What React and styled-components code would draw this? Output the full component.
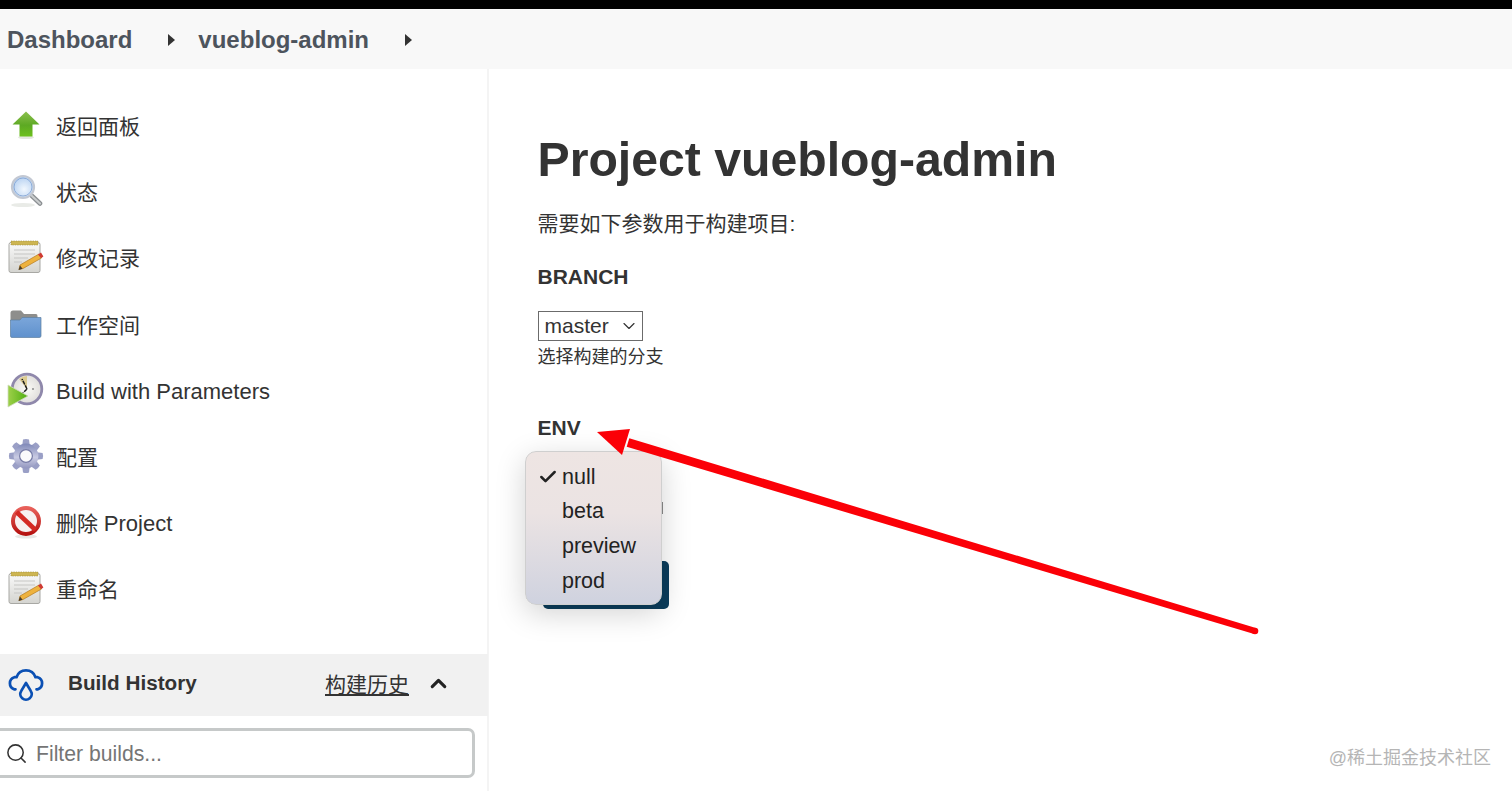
import React from 'react';
import styled, { createGlobalStyle } from 'styled-components';
import { Check, ChevronDown, ChevronUp, Search } from 'lucide-react';

const GlobalStyle = createGlobalStyle`
    html, body {
        margin: 0;
        padding: 0;
        height: 100%;
        overflow: hidden;
        background: #fff;
    }
    body {
        font-family: "Liberation Sans", "Noto Sans CJK SC", Arial, sans-serif;
        color: #333;
    }
`

const Latin = styled.span`
    font-size: 22px;
`
const LatinLabel = styled(Latin)`
    display: block;
    padding-top: 4px;
`

function BackIcon() {
    return (
        <svg width="30" height="30" viewBox="0 0 30 30">
            <defs>
                <linearGradient id="backFill" x1="0" y1="0" x2="0" y2="1">
                    <stop offset="0" stopColor="#8cc04f" />
                    <stop offset="0.55" stopColor="#5da923" />
                    <stop offset="1" stopColor="#6cc01c" />
                </linearGradient>
            </defs>
            <ellipse cx="15" cy="27.5" rx="8" ry="1.6" fill="#e4e7df" />
            <path d="M15 1.5 L28.5 14.5 H21.5 V26.5 H8.5 V14.5 H1.5 Z" fill="url(#backFill)" />
        </svg>
    )
}

function StatusIcon() {
    return (
        <svg width="34" height="34" viewBox="0 0 34 34">
            <defs>
                <radialGradient id="lensFill" cx="0.55" cy="0.6" r="0.7">
                    <stop offset="0" stopColor="#f2f8fe" />
                    <stop offset="1" stopColor="#a9c8ee" />
                </radialGradient>
            </defs>
            <ellipse cx="14" cy="31" rx="12" ry="2" fill="#e9ebe7" />
            <path d="M22 21 L31 29.5" stroke="#8b8f92" strokeWidth="4.6" strokeLinecap="round" />
            <path d="M22 21 L31 29.5" stroke="#c9cccd" strokeWidth="2.2" strokeLinecap="round" />
            <circle cx="14" cy="13" r="11" fill="url(#lensFill)" stroke="#c3c8d2" strokeWidth="2.2" />
            <circle cx="14" cy="13" r="9" fill="none" stroke="#7d9fd0" strokeWidth="0.8" />
        </svg>
    )
}

function NotepadIcon() {
    return (
        <svg width="36" height="34" viewBox="0 0 36 34">
            <defs>
                <linearGradient id="padFill" x1="0" y1="0" x2="0" y2="1">
                    <stop offset="0" stopColor="#fafafa" />
                    <stop offset="1" stopColor="#d4d4d0" />
                </linearGradient>
            </defs>
            <rect x="1" y="2.5" width="31" height="30" rx="2" fill="url(#padFill)" stroke="#a8a8a4" />
            <rect x="3" y="1" width="27" height="4" fill="#cdb552" stroke="#9b8a3a" strokeWidth="0.6" strokeDasharray="1.4 1" />
            <path d="M6 10H27M6 14H27M6 18H20M6 22H14" stroke="#c6c6c4" strokeWidth="1.2" />
            <path d="M12 25 L31 14 L33.5 18 L15 28.5 L11 29.5 Z" fill="#eeb23e" stroke="#b57a1e" strokeWidth="0.7" />
            <path d="M30 14.4 L33 12.6 L35.4 16.5 L33 18.2 Z" fill="#cf3a33" />
            <path d="M10.5 30 L12 25.5 L14.6 28.8 Z" fill="#4d3f2b" />
        </svg>
    )
}

function FolderIcon() {
    return (
        <svg width="34" height="30" viewBox="0 0 34 30">
            <defs>
                <linearGradient id="folderFill" x1="0" y1="0" x2="0" y2="1">
                    <stop offset="0" stopColor="#7ba6da" />
                    <stop offset="1" stopColor="#5f91cd" />
                </linearGradient>
            </defs>
            <path d="M1.5 4 Q1.5 1.5 4 1.5 H12 L15 5 H27 Q28.5 5 28.5 7 V12 H1.5 Z" fill="#8e8e8c" />
            <path d="M1.5 11 L11 11 L13 8.5 H32 V27 Q32 28.5 30 28.5 H3 Q1.5 28.5 1.5 27 Z" fill="url(#folderFill)" stroke="#5d7f9f" strokeWidth="0.7" />
        </svg>
    )
}

function BuildIcon() {
    return (
        <svg width="38" height="38" viewBox="0 0 38 38">
            <defs>
                <linearGradient id="playFill" x1="0" y1="0" x2="1" y2="0">
                    <stop offset="0" stopColor="#9ed04a" />
                    <stop offset="1" stopColor="#4fae10" />
                </linearGradient>
                <radialGradient id="clockFace" cx="0.5" cy="0.5" r="0.55">
                    <stop offset="0" stopColor="#fbfbf6" />
                    <stop offset="1" stopColor="#dcdad8" />
                </radialGradient>
            </defs>
            <circle cx="20" cy="18" r="14.8" fill="url(#clockFace)" stroke="#8f88ab" strokeWidth="2.8" />
            <path d="M20 18 L12 8 A13 13 0 0 1 20 5 Z" fill="#dccb90" />
            <path d="M20 18 L15 8 M20 18 L14 24" stroke="#1c1c1c" strokeWidth="1.5" strokeDasharray="4 1" />
            <circle cx="26" cy="18" r="1" fill="#8c8c8c" />
            <path d="M1 14 L21 25 L1 36 Z" fill="url(#playFill)" stroke="#cfdcbc" strokeWidth="0.8" />
        </svg>
    )
}

function GearIcon() {
    const teeth = [0, 45, 90, 135, 180, 225, 270, 315]
    return (
        <svg width="36" height="36" viewBox="0 0 36 36">
            <defs>
                <linearGradient id="gearFill" x1="0" y1="0" x2="0" y2="1">
                    <stop offset="0" stopColor="#7f88b8" />
                    <stop offset="0.55" stopColor="#c9cbe3" />
                    <stop offset="1" stopColor="#9296bf" />
                </linearGradient>
            </defs>
            {teeth.map(deg => (
                <path key={deg} d="M14 9 L15 1.4 Q18 0.4 21 1.4 L22 9 Z" fill="#9a9fc6" transform={`rotate(${deg} 18 18)`} />
            ))}
            <circle cx="18" cy="18" r="12.4" fill="url(#gearFill)" />
            <circle cx="18" cy="18" r="6.4" fill="#fafafc" stroke="#767ba6" strokeWidth="1.2" />
        </svg>
    )
}

function DeleteIcon() {
    return (
        <svg width="34" height="34" viewBox="0 0 34 34">
            <defs>
                <linearGradient id="ringFill" x1="0" y1="0" x2="0" y2="1">
                    <stop offset="0" stopColor="#e8605a" />
                    <stop offset="1" stopColor="#b51210" />
                </linearGradient>
            </defs>
            <ellipse cx="17" cy="31.5" rx="11" ry="2" fill="#e8e8e6" />
            <circle cx="17" cy="16" r="13" fill="#f7f0f0" stroke="url(#ringFill)" strokeWidth="4" />
            <path d="M7.5 7 L26.5 25" stroke="#d42a24" strokeWidth="4.6" />
        </svg>
    )
}

function CloudIcon() {
    return (
        <svg width="40" height="38" viewBox="0 0 38 36" fill="none" stroke="#0b50b4" strokeWidth="2.6" strokeLinecap="round" strokeLinejoin="round">
            <path d="M9 24 H8 A6 6 0 0 1 8 12.5 H10 A9.5 9.5 0 0 1 28 12.5 H30 A6 6 0 0 1 30 24 H29" />
            <path d="M19 18 L23.5 25.5 A5.4 5.4 0 1 1 14.5 25.5 Z" />
        </svg>
    )
}

const navItems = [
    { id: 'back', label: '返回面板', icon: <BackIcon /> },
    { id: 'status', label: '状态', icon: <StatusIcon /> },
    { id: 'changes', label: '修改记录', icon: <NotepadIcon /> },
    { id: 'workspace', label: '工作空间', icon: <FolderIcon /> },
    { id: 'build', label: <LatinLabel>Build with Parameters</LatinLabel>, icon: <BuildIcon /> },
    { id: 'config', label: '配置', icon: <GearIcon /> },
    { id: 'delete', label: <>删除 <Latin>Project</Latin></>, icon: <DeleteIcon /> },
    { id: 'rename', label: '重命名', icon: <NotepadIcon /> },
]

function App() {
    return (
        <Page>
            <GlobalStyle />
            <TopEdge />
            <Breadcrumb>
                <Crumb>Dashboard</Crumb>
                <Caret />
                <Crumb>vueblog-admin</Crumb>
                <Caret />
            </Breadcrumb>
            <Body>
                <Sidebar>
                    <NavList>
                        {navItems.map(item => (
                            <NavItem key={item.id}>
                                <NavIcon>{item.icon}</NavIcon>
                                <span>{item.label}</span>
                            </NavItem>
                        ))}
                    </NavList>
                    <HistoryHeader>
                        <CloudIcon />
                        <HistoryTitle>Build History</HistoryTitle>
                        <HistoryLink>构建历史</HistoryLink>
                        <ChevronUp size={25} strokeWidth={3} color="#222" />
                    </HistoryHeader>
                    <FilterBox>
                        <Search size={23} strokeWidth={1.6} color="#333" />
                        <span>Filter builds...</span>
                    </FilterBox>
                </Sidebar>
                <Main>
                    <Title>Project vueblog-admin</Title>
                    <Intro>需要如下参数用于构建项目:</Intro>
                    <ParamName>BRANCH</ParamName>
                    <SelectBox>
                        master
                        <ChevronDown size={20} strokeWidth={1.4} color="#333" />
                    </SelectBox>
                    <Help>选择构建的分支</Help>
                    <EnvName>ENV</EnvName>
                    <EnvSelect />
                    <BuildButton />
                    <Menu>
                        <MenuItem $checked>
                            <Check size={20} strokeWidth={3} color="#222" />
                            null
                        </MenuItem>
                        <MenuItem>beta</MenuItem>
                        <MenuItem>preview</MenuItem>
                        <MenuItem>prod</MenuItem>
                    </Menu>
                </Main>
            </Body>
            <Arrow viewBox="0 0 1512 791" width="1512" height="791">
                <path d="M629.3 438.2 L1255.9 627.9 L1254.1 634.1 L626.7 446.8 Z" fill="#fb0007" />
                <circle cx="1255" cy="631" r="3.3" fill="#fb0007" />
                <path d="M597 432 L630 429 L622 455 Z" fill="#fb0007" />
            </Arrow>
            <Watermark>@稀土掘金技术社区</Watermark>
        </Page>
    )
}

export default App

const Page = styled.div`
    width: 1512px;
    height: 791px;
    overflow: hidden;
    position: relative;
    background: #fff;
`
const TopEdge = styled.div`
    height: 9px;
    background: #000;
`
const Breadcrumb = styled.nav`
    height: 60px;
    box-sizing: border-box;
    padding: 1px 0 0 7px;
    background: #f8f8f8;
    display: flex;
    align-items: center;
`
const Crumb = styled.span`
    font-size: 24px;
    font-weight: 700;
    color: #4d545d;
`
const Caret = styled.i`
    width: 0;
    height: 0;
    margin: 0 23px 0 36px;
    border-left: 7px solid #333;
    border-top: 6px solid transparent;
    border-bottom: 6px solid transparent;
`
const Body = styled.div`
    display: flex;
    height: 722px;
`
const Sidebar = styled.aside`
    width: 487px;
    flex: none;
    border-right: 2px solid #f4f4f4;
    display: flex;
    flex-direction: column;
`
const NavList = styled.ul`
    list-style: none;
    margin: 0;
    padding: 23px 0 0;
    height: 585px;
    box-sizing: border-box;
`
const NavItem = styled.li`
    height: 66.2px;
    display: flex;
    align-items: center;
    font-size: 21px;
    color: #333;
`
const NavIcon = styled.span`
    width: 51px;
    margin-right: 5px;
    flex: none;
    display: flex;
    align-items: center;
    justify-content: center;
`
const HistoryHeader = styled.div`
    height: 62px;
    box-sizing: border-box;
    background: #f1f1f1;
    display: flex;
    align-items: center;
    padding: 0 37px 4px 6px;
    margin-right: -1px;
`
const HistoryTitle = styled.b`
    margin-left: 22px;
    font-size: 20.7px;
    color: #333;
    flex: 1;
`
const HistoryLink = styled.span`
    font-size: 21px;
    color: #333;
    text-decoration: underline;
    margin-right: 17px;
`
const FilterBox = styled.div`
    margin: 12px 12px 0 -6px;
    height: 50px;
    box-sizing: border-box;
    border: 3px solid #c6c9c9;
    border-radius: 7px;
    display: flex;
    align-items: center;
    gap: 8px;
    padding: 1px 0 0 8px;
    font-size: 21.2px;
    color: #757575;
`
const Main = styled.main`
    flex: 1;
    padding: 58px 0 0 48.5px;
    position: relative;
`
const Title = styled.h1`
    margin: 0;
    font-size: 48.2px;
    line-height: 64px;
    font-weight: 700;
    color: #333;
`
const Intro = styled.p`
    margin: 18px 0 0;
    font-size: 21px;
    line-height: 30px;
`
const ParamName = styled.h3`
    margin: 23px 0 0;
    font-size: 21px;
    line-height: 30px;
    font-weight: 700;
`
const SelectBox = styled.div`
    margin-top: 19px;
    width: 105.5px;
    height: 30px;
    box-sizing: border-box;
    border: 1px solid #6b6b6b;
    display: flex;
    align-items: center;
    justify-content: space-between;
    padding: 0 3px 0 6px;
    font-size: 21px;
`
const Help = styled.div`
    margin-top: 4px;
    font-size: 18px;
    line-height: 24px;
`
const EnvName = styled(ParamName)`
    margin-top: 44px;
`
const EnvSelect = styled.div`
    margin-top: 59px;
    width: 125.5px;
    height: 12px;
    box-sizing: border-box;
    border-right: 1px solid #8a8a8a;
`
const BuildButton = styled.div`
    margin: 47px 0 0 5px;
    width: 126px;
    height: 48px;
    background: #0b3d5c;
    border-radius: 5px;
`
const Menu = styled.ul`
    position: absolute;
    left: 36px;
    top: 382px;
    width: 137px;
    height: 154px;
    margin: 0;
    padding: 8px 0 0;
    box-sizing: border-box;
    list-style: none;
    border: 1px solid #cfcfcf;
    border-radius: 11px;
    background: linear-gradient(180deg, #eee5e3 0%, #ebe3e3 40%, #cfd2df 100%);
    box-shadow: 0 8px 30px rgba(0, 0, 0, 0.18);
`
const MenuItem = styled.li`
    height: 34.6px;
    display: flex;
    align-items: center;
    gap: 4px;
    padding-left: ${props => (props.$checked ? '12px' : '36px')};
    font-size: 21.5px;
    color: #222;
`
const Arrow = styled.svg`
    position: absolute;
    left: 0;
    top: 0;
    pointer-events: none;
`
const Watermark = styled.div`
    position: absolute;
    right: 21px;
    top: 747px;
    font-size: 18px;
    line-height: 22px;
    color: #b5b5b5;
`
